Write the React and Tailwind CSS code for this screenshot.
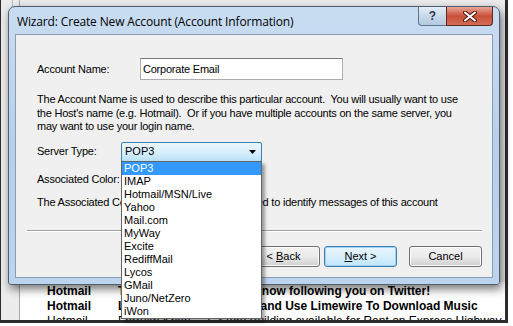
const items = [
  'POP3',
  'IMAP',
  'Hotmail/MSN/Live',
  'Yahoo',
  'Mail.com',
  'MyWay',
  'Excite',
  'RediffMail',
  'Lycos',
  'GMail',
  'Juno/NetZero',
  'iWon',
];

const rows = [
  { from: 'Hotmail', subject: 'Twitter: Farrukh Khan  is now following you on Twitter!', bold: true },
  { from: 'Hotmail', subject: 'Learn To   Unblock Sites and Use Limewire To Download Music', bold: true },
  { from: 'Hotmail', subject: 'Farrukh Khan     F Story Building available for Rent on Express Highway Islamabad', bold: false },
];

function WinButton({ children, focused, className = '' }) {
  return (
    <button
      className={
        'h-[21px] w-[73px] rounded-[3px] border text-[11px] tracking-normal text-black ' +
        (focused
          ? 'border-[#3c7fb1] bg-gradient-to-b from-[#eaf6fd] via-[#d9f0fc] to-[#bee6fd] shadow-[inset_0_0_0_1px_#9fd3f4]'
          : 'border-[#707070] bg-gradient-to-b from-[#f2f2f2] via-[#ebebeb] to-[#cfcfcf] shadow-[inset_0_0_0_1px_#fcfcfc]') +
        ' ' +
        className
      }
    >
      {children}
    </button>
  );
}

export default function App() {
  return (
    <div className="relative h-[326px] w-[513px] overflow-hidden bg-white font-['Liberation_Sans',Arial,sans-serif] text-[11px] text-black">
      {/* background application */}
      <div className="absolute left-0 top-0 flex h-[323px] w-[508px] flex-col border-b-[3px] border-l border-r-[3px] border-[#2c2c2c] bg-[#ececec]">
        <div className="flex flex-1">
          <div className="w-[12px] border-r border-[#bdbdbd]" />
          <div className="w-[7px] border-r border-[#a9a9a9]" />
          <div className="flex-1" />
        </div>
        <div className="flex h-[38px] shrink-0">
          <div className="w-[19px] shrink-0 border-r border-[#a9a9a9] bg-[#ececec]" />
          <div className="flex-1 overflow-hidden bg-white pl-[27px] pt-[2px] text-[12px] leading-[15px]">
            {rows.map((r, i) => (
              <div key={i} className={'flex whitespace-pre ' + (r.bold ? 'font-bold' : '')}>
                <span className="w-[71px] shrink-0">{r.from}</span>
                <span>{r.subject}</span>
              </div>
            ))}
          </div>
        </div>
      </div>

      {/* dialog window */}
      <div className="absolute left-[8px] top-[6px] flex h-[279px] w-[492px] flex-col rounded-t-[7px] rounded-b-[3px] border border-[#4f5f70] bg-gradient-to-b from-[#c9ddf2] via-[#b7cfea] to-[#bcd4ee] px-[6px] pb-[6px] shadow-[2px_4px_10px_rgba(0,0,0,0.55)]">
        <div className="flex h-[27px] shrink-0 items-start">
          <span className="pl-[2px] pt-[7px] font-['Open_Sans','Noto_Sans',sans-serif] text-[12px] leading-[16px] tracking-[-0.15px] text-black">
            Wizard: Create New Account (Account Information)
          </span>
          <div className="ml-auto flex">
            <div className="flex h-[19px] w-[28px] items-center justify-center rounded-bl-[4px] border border-t-0 border-r-0 border-[#61748a] bg-gradient-to-b from-[#e3edf7] via-[#c9d9ea] to-[#b4c9e0] text-[12px] font-bold text-[#2b3a4c]">
              ?
            </div>
            <div className="flex h-[19px] w-[47px] items-center justify-center rounded-br-[4px] border border-t-0 border-[#5e2a22] bg-gradient-to-b from-[#e7a597] via-[#c9503a] to-[#d36b55]">
              <svg width="14" height="11" viewBox="0 0 14 11">
                <path d="M2 1.5 L12 9.5 M12 1.5 L2 9.5" stroke="#4a1c14" strokeWidth="4" strokeLinecap="round" />
                <path d="M2 1.5 L12 9.5 M12 1.5 L2 9.5" stroke="#ffffff" strokeWidth="2" strokeLinecap="round" />
              </svg>
            </div>
          </div>
        </div>

        <div className="flex flex-1 flex-col border border-[#8a9db3] bg-[#f0f0f0] pl-[21px] pr-[9px] tracking-[-0.22px]">
          <div className="mt-[23px] flex items-center">
            <span className="w-[103px]">Account Name:</span>
            <div className="flex h-[22px] w-[203px] items-center border border-[#abadb3] border-t-[#7a7a7a] bg-white pl-[2px]">
              Corporate Email
            </div>
          </div>

          <p className="mt-[13px] whitespace-pre leading-[13.5px]">
            {'The Account Name is used to describe this particular account.  You will usually want to use\nthe Host\'s name (e.g. Hotmail).  Or if you have multiple accounts on the same server, you\nmay want to use your login name.'}
          </p>

          <div className="mt-[8px] flex items-center">
            <span className="w-[84px]">Server Type:</span>
            <div className="flex h-[20px] w-[141px] items-center justify-between rounded-[2px] border border-[#3c7fb1] bg-gradient-to-b from-[#eaf6fd] via-[#d9f0fc] to-[#b9e1f8] pl-[3px] pr-[4px] tracking-normal">
              <span>POP3</span>
              <svg width="8" height="4" viewBox="0 0 8 4">
                <path d="M0 0 H7 L3.5 4 Z" fill="#000" />
              </svg>
            </div>
          </div>

          <div className="mt-[8px] flex h-[20px] items-center">
            <span className="whitespace-nowrap">Associated Color:</span>
          </div>

          <p className="mt-[6px] leading-[13px]">
            The Associated Color is the color that will be used to identify messages of this account
          </p>

          <div className="mt-[21px] mr-[1px] ml-[-10px] border-t border-b border-t-[#a0a0a0] border-b-white" />

          <div className="mt-[14px] flex justify-end gap-[4px] pr-[1px]">
            <WinButton>
              &lt; <span className="underline">B</span>ack
            </WinButton>
            <WinButton focused>
              <span className="underline">N</span>ext &gt;
            </WinButton>
            <WinButton className="ml-[8px]">Cancel</WinButton>
          </div>
        </div>
      </div>

      {/* open dropdown list */}
      <div className="absolute left-[121px] top-[161px] w-[141px] border border-[#646464] bg-white shadow-[3px_3px_3px_rgba(0,0,0,0.35)]">
        {items.map((it, i) => (
          <div
            key={it}
            className={'h-[13px] pl-[2px] leading-[13px] ' + (i === 0 ? 'bg-[#3399ff] text-white' : 'text-black')}
          >
            {it}
          </div>
        ))}
      </div>
    </div>
  );
}
